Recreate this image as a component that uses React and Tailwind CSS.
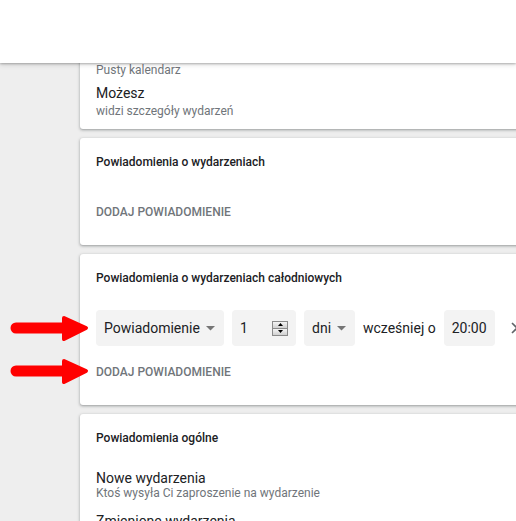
import React from "react";

const cardCls =
  "w-[600px] bg-white rounded-[3px] shadow-[0_1px_2px_0_rgba(60,64,67,0.3),0_1px_3px_1px_rgba(60,64,67,0.15)]";

function Caret() {
  return (
    <svg width="9" height="5" viewBox="0 0 9 5" className="shrink-0">
      <path d="M0 0 L9 0 L4.5 4.5 Z" fill="#757575" />
    </svg>
  );
}

function Spinner() {
  return (
    <div className="flex flex-col w-[16px] h-[15px] border border-[#8a8a8a] bg-[#dcdcdc]">
      <div className="flex-1 flex items-center justify-center border-b border-[#8a8a8a] bg-gradient-to-b from-[#f4f4f4] to-[#d0d0d0]">
        <svg width="5" height="3" viewBox="0 0 5 3">
          <path d="M0 3 L5 3 L2.5 0 Z" fill="#000" />
        </svg>
      </div>
      <div className="flex-1 flex items-center justify-center bg-gradient-to-b from-[#f4f4f4] to-[#d0d0d0]">
        <svg width="5" height="3" viewBox="0 0 5 3">
          <path d="M0 0 L5 0 L2.5 3 Z" fill="#000" />
        </svg>
      </div>
    </div>
  );
}

function Arrow({ top }) {
  return (
    <svg
      width="92"
      height="30"
      viewBox="0 0 92 30"
      className="absolute left-0"
      style={{ top }}
    >
      <line x1="16" y1="15" x2="68" y2="15" stroke="#ff0000" strokeWidth="11" strokeLinecap="round" />
      <path
        d="M64 5 L86 15 L64 26 Z"
        fill="#ff0000"
        stroke="#ff0000"
        strokeWidth="4"
        strokeLinejoin="round"
      />
    </svg>
  );
}

export default function App() {
  return (
    <div
      className="relative w-[516px] h-[521px] overflow-hidden bg-[#eeeeee] text-[#202124]"
      style={{ fontFamily: "Roboto, 'Noto Sans', sans-serif" }}
    >
      <div className="relative z-10 h-[63px] bg-white shadow-[0_1px_2px_rgba(0,0,0,0.25),0_2px_5px_rgba(0,0,0,0.12)]" />

      <div className="flex flex-col gap-[9px] pl-[80px] -mt-[11px]">
        {/* Card 1 */}
        <div className={cardCls + " pt-[10px] pb-[10px] pl-[16px]"}>
          <div className="text-[12px] leading-[16px] text-[#70757a]">Pusty kalendarz</div>
          <div className="mt-[6px] text-[14px] leading-[19px]">Możesz</div>
          <div className="text-[12px] leading-[16px] text-[#70757a]">widzi szczegóły wydarzeń</div>
        </div>

        {/* Card 2 */}
        <div className={cardCls + " pt-[16px] pb-[25px] pl-[16px]"}>
          <div className="text-[12px] leading-[16px] font-medium">Powiadomienia o wydarzeniach</div>
          <div className="mt-[34px] text-[12px] leading-[16px] font-medium text-[#70757a] uppercase">
            Dodaj powiadomienie
          </div>
        </div>

        {/* Card 3 */}
        <div className={cardCls + " pt-[16px] pb-[25px] pl-[16px]"}>
          <div className="text-[12px] leading-[16px] font-medium">
            Powiadomienia o wydarzeniach całodniowych
          </div>
          <div className="mt-[24px] flex items-center gap-[8px] h-[36px] text-[14px]">
            <div className="w-[128px] h-[36px] rounded-[4px] bg-[#f3f3f3] flex items-center justify-between pl-[8px] pr-[9px]">
              <span>Powiadomienie</span>
              <Caret />
            </div>
            <div className="w-[64px] h-[36px] rounded-[4px] bg-[#f3f3f3] flex items-center justify-between pl-[8px] pr-[8px]">
              <span>1</span>
              <Spinner />
            </div>
            <div className="w-[51px] h-[36px] rounded-[4px] bg-[#f3f3f3] flex items-center justify-between pl-[8px] pr-[9px]">
              <span>dni</span>
              <Caret />
            </div>
            <span>wcześniej o</span>
            <div className="w-[51px] h-[36px] rounded-[4px] bg-[#f3f3f3] flex items-center pl-[8px]">
              <span>20:00</span>
            </div>
            <svg width="12" height="12" viewBox="0 0 12 12" className="ml-[8px]">
              <path d="M1 1 L11 11 M11 1 L1 11" stroke="#5f6368" strokeWidth="1.6" />
            </svg>
          </div>
          <div className="mt-[18px] text-[12px] leading-[16px] font-medium text-[#70757a] uppercase">
            Dodaj powiadomienie
          </div>
        </div>

        {/* Card 4 */}
        <div className={cardCls + " pt-[16px] pb-[20px] pl-[16px]"}>
          <div className="text-[12px] leading-[16px] font-medium">Powiadomienia ogólne</div>
          <div className="mt-[24px] text-[14px] leading-[16px]">Nowe wydarzenia</div>
          <div className="-mt-[1px] text-[12px] leading-[16px] text-[#70757a]">
            Ktoś wysyła Ci zaproszenie na wydarzenie
          </div>
          <div className="mt-[12px] text-[14px] leading-[16px]">Zmienione wydarzenia</div>
          <div className="text-[12px] leading-[16px] text-[#70757a]">
            Ktoś zmienia wydarzenie
          </div>
        </div>
      </div>

      <Arrow top={313} />
      <Arrow top={356} />
    </div>
  );
}
